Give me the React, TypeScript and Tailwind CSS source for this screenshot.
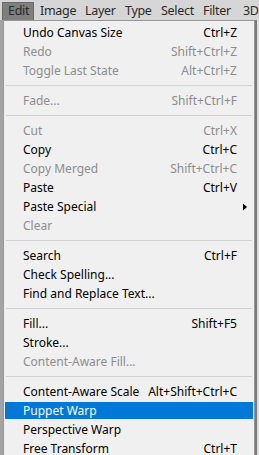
import React from "react";

type Item =
  | { sep: true }
  | { label: string; shortcut?: string; disabled?: boolean; sub?: boolean; active?: boolean };

const items: Item[] = [
  { label: "Undo Canvas Size", shortcut: "Ctrl+Z" },
  { label: "Redo", shortcut: "Shift+Ctrl+Z", disabled: true },
  { label: "Toggle Last State", shortcut: "Alt+Ctrl+Z", disabled: true },
  { sep: true },
  { label: "Fade...", shortcut: "Shift+Ctrl+F", disabled: true },
  { sep: true },
  { label: "Cut", shortcut: "Ctrl+X", disabled: true },
  { label: "Copy", shortcut: "Ctrl+C" },
  { label: "Copy Merged", shortcut: "Shift+Ctrl+C", disabled: true },
  { label: "Paste", shortcut: "Ctrl+V" },
  { label: "Paste Special", sub: true },
  { label: "Clear", disabled: true },
  { sep: true },
  { label: "Search", shortcut: "Ctrl+F" },
  { label: "Check Spelling..." },
  { label: "Find and Replace Text..." },
  { sep: true },
  { label: "Fill...", shortcut: "Shift+F5" },
  { label: "Stroke..." },
  { label: "Content-Aware Fill...", disabled: true },
  { sep: true },
  { label: "Content-Aware Scale", shortcut: "Alt+Shift+Ctrl+C" },
  { label: "Puppet Warp", active: true },
  { label: "Perspective Warp" },
  { label: "Free Transform", shortcut: "Ctrl+T" },
];

export default function App() {
  const others = "pl-[6px] flex items-center leading-none shrink-0";
  return (
    <div
      className="w-[259px] h-[455px] overflow-hidden bg-[#d6d6d6] flex flex-col text-[12px]"
      style={{ fontFamily: '"Noto Sans", "Open Sans", sans-serif' }}
    >
      <div className="h-[20px] flex items-stretch pl-[2px] pt-[2px] text-[#2a2a2a] shrink-0 text-[12.5px] tracking-[-0.3px] whitespace-nowrap">
        <div className="w-[32px] pl-[5px] flex items-center bg-[#7f7f7f] border border-[#6a6a6a] border-b-0 leading-none shrink-0">
          Edit
        </div>
        <div className={"w-[45px] " + others}>Image</div>
        <div className={"w-[40px] " + others}>Layer</div>
        <div className={"w-[36px] " + others}>Type</div>
        <div className={"w-[42px] " + others}>Select</div>
        <div className={"w-[40px] " + others}>Filter</div>
        <div className={"w-[30px] " + others}>3D</div>
      </div>
      <div className="flex flex-1 min-h-0">
        <div className="w-[3px] bg-[#a3a3a3] shrink-0" />
        <div className="w-[252px] bg-[#f0f0f0] border border-[#979797] border-b-0 pt-[2px] px-[1px] shrink-0 overflow-hidden">
          {items.map((it, i) =>
            "sep" in it ? (
              <div key={i} className="h-[11px] flex items-center pl-[1px] pr-[1px]">
                <div className="h-px w-full bg-[#d2d2d2]" />
              </div>
            ) : (
              <div key={i} className="h-[19px] py-[1px]">
                <div
                  className={
                    "h-full flex items-center pl-[18px] pr-[16px] relative " +
                    (it.active
                      ? "bg-[#0078d7] text-white"
                      : it.disabled
                      ? "text-[#8d8d8d]"
                      : "text-black")
                  }
                >
                  <span className="flex-1 whitespace-nowrap">{it.label}</span>
                  {it.shortcut && <span className="whitespace-nowrap">{it.shortcut}</span>}
                  {it.sub && (
                    <svg
                      className="absolute right-[6px] top-1/2 -translate-y-1/2"
                      width="4"
                      height="7"
                      viewBox="0 0 4 7"
                    >
                      <path d="M0 0 L4 3.5 L0 7 Z" fill="#000" />
                    </svg>
                  )}
                </div>
              </div>
            )
          )}
        </div>
        <div className="w-[2px] bg-[#7a7a7a] shrink-0" />
        <div className="flex-1 bg-[#dedede]" />
      </div>
    </div>
  );
}
